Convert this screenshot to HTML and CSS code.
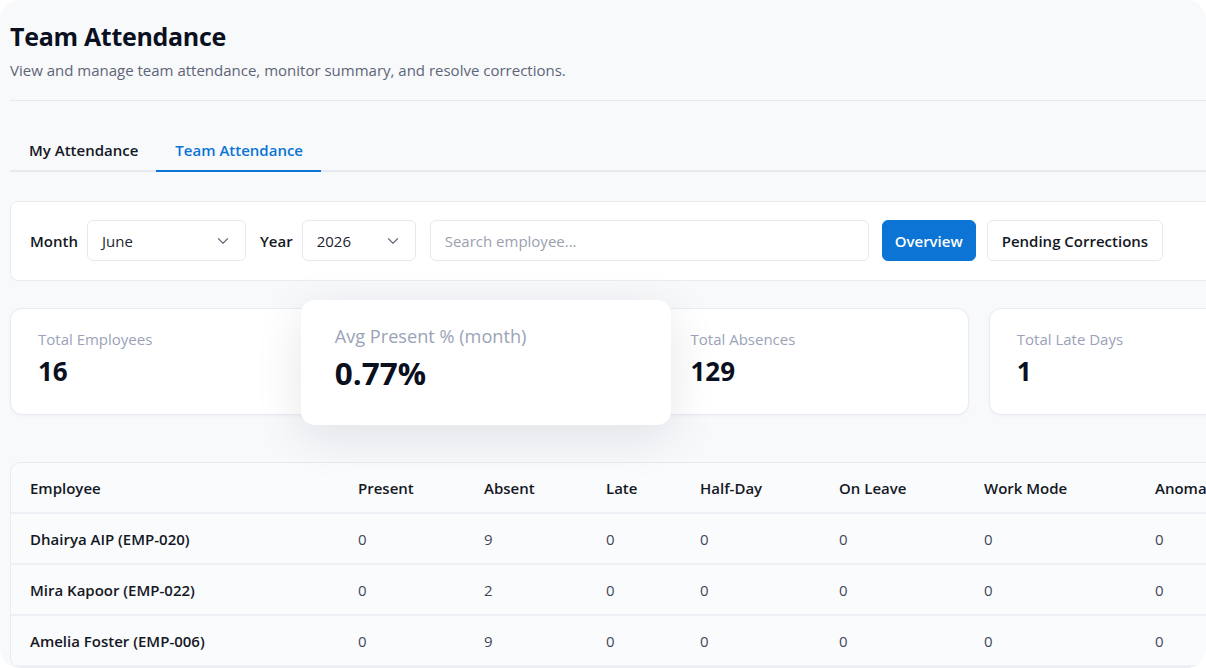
FILE: index.html
```html
<!DOCTYPE html>
<html lang="en">
<head>
    <meta charset="UTF-8">
    <meta name="viewport" content="width=device-width, initial-scale=1.0">
    <title>Team Attendance</title>
    <link rel="stylesheet" href="styles.css">
</head>
<body>
<div class="frame">
    <div class="page">

        <header class="page-head">
            <h1>Team Attendance</h1>
            <p>View and manage team attendance, monitor summary, and resolve corrections.</p>
        </header>

        <nav class="tabs">
            <a class="tab">My Attendance</a>
            <a class="tab active">Team Attendance</a>
        </nav>

        <!-- Filtres -->
        <section class="filters">
            <label class="filter-label">Month</label>
            <div class="select select-month">
                <span>June</span>
                <svg width="12" height="8" viewBox="0 0 12 8"><path d="M1.5 1.8 6 6.2l4.5-4.4" fill="none" stroke="#6b7280" stroke-width="1.3" stroke-linecap="round" stroke-linejoin="round"/></svg>
            </div>
            <label class="filter-label">Year</label>
            <div class="select select-year">
                <span>2026</span>
                <svg width="12" height="8" viewBox="0 0 12 8"><path d="M1.5 1.8 6 6.2l4.5-4.4" fill="none" stroke="#6b7280" stroke-width="1.3" stroke-linecap="round" stroke-linejoin="round"/></svg>
            </div>
            <input type="text" class="search" placeholder="Search employee...">
            <button class="btn btn-primary">Overview</button>
            <button class="btn">Pending Corrections</button>
        </section>

        <!-- Cartes de resume -->
        <section class="stats">
            <div class="stat">
                <div class="stat-label">Total Employees</div>
                <div class="stat-value">16</div>
            </div>
            <div class="stat stat-hover">
                <div class="stat-label">Avg Present % (month)</div>
                <div class="stat-value">0.77%</div>
            </div>
            <div class="stat">
                <div class="stat-label">Total Absences</div>
                <div class="stat-value">129</div>
            </div>
            <div class="stat">
                <div class="stat-label">Total Late Days</div>
                <div class="stat-value">1</div>
            </div>
        </section>

        <section class="table-card">
            <table class="att-table">
                <thead>
                    <tr>
                        <th class="c-emp">Employee</th>
                        <th class="c-present">Present</th>
                        <th class="c-absent">Absent</th>
                        <th class="c-late">Late</th>
                        <th class="c-half">Half-Day</th>
                        <th class="c-leave">On Leave</th>
                        <th class="c-mode">Work Mode</th>
                        <th>Anomalies</th>
                    </tr>
                </thead>
                <tbody>
                    <tr>
                        <td class="name">Dhairya AIP (EMP-020)</td>
                        <td>0</td><td>9</td><td>0</td><td>0</td><td>0</td><td>0</td><td>0</td>
                    </tr>
                    <tr>
                        <td class="name">Mira Kapoor (EMP-022)</td>
                        <td>0</td><td>2</td><td>0</td><td>0</td><td>0</td><td>0</td><td>0</td>
                    </tr>
                    <tr>
                        <td class="name">Amelia Foster (EMP-006)</td>
                        <td>0</td><td>9</td><td>0</td><td>0</td><td>0</td><td>0</td><td>0</td>
                    </tr>
                </tbody>
            </table>
        </section>

    </div>
</div>
</body>
</html>
```

FILE: styles.css
```css
body {
    margin: 0;
    padding: 0;
    background-color: #ffffff;
    font-family: "Open Sans", "Noto Sans", sans-serif;
    color: #111827;
}

.frame {
    width: 1206px;
    height: 668px;
    background-color: #f8f9fb;
    border-radius: 20px;
    overflow: hidden;
}

.page {
    width: 1285px;
    padding: 20px 0 0 10px;
}

/* En-tete */
.page-head {
    padding-bottom: 19px;
    border-bottom: 1px solid #e6e9ef;
}

.page-head h1 {
    margin: 0;
    font-size: 25px;
    font-weight: 700;
    color: #0b1020;
    letter-spacing: -0.3px;
    line-height: 32px;
}

.page-head p {
    margin: 7px 0 0 0;
    font-size: 15px;
    color: #5d6577;
    line-height: 22px;
}

/* Onglets */
.tabs {
    display: flex;
    margin-top: 29px;
    border-bottom: 2px solid #e6e9ef;
}

.tab {
    padding: 10px 18px 10px 19px;
    font-size: 15px;
    font-weight: 600;
    color: #141824;
    margin-bottom: -2px;
    border-bottom: 2px solid transparent;
}

.tab.active {
    color: #0b74d5;
    border-bottom-color: #0b74d5;
}

/* Filtres */
.filters {
    display: flex;
    align-items: center;
    margin-top: 29px;
    padding: 18px 19px 19px 19px;
    background-color: #ffffff;
    border: 1px solid #e8ebf0;
    border-radius: 8px;
}

.filter-label {
    font-size: 15px;
    font-weight: 600;
    color: #141824;
    margin-right: 9px;
}

.select {
    display: flex;
    align-items: center;
    justify-content: space-between;
    height: 41px;
    padding: 0 16px 0 14px;
    border: 1px solid #e6e9ef;
    border-radius: 6px;
    background-color: #ffffff;
    font-size: 15px;
    color: #1f2430;
    box-sizing: border-box;
}

.select-month {
    width: 159px;
    margin-right: 14px;
}

.select-year {
    width: 114px;
    margin-right: 14px;
}

.search {
    width: 439px;
    height: 41px;
    box-sizing: border-box;
    padding: 0 14px;
    border: 1px solid #e6e9ef;
    border-radius: 6px;
    font-family: inherit;
    font-size: 15px;
    color: #1f2430;
    margin-right: 13px;
}

.search::placeholder {
    color: #9aa1af;
}

.btn {
    height: 41px;
    padding: 0 14px;
    font-family: inherit;
    font-size: 15px;
    font-weight: 600;
    color: #141824;
    background-color: #ffffff;
    border: 1px solid #e6e9ef;
    border-radius: 6px;
    margin-right: 11px;
}

.btn-primary {
    padding: 0 12px;
    background-color: #0b74d5;
    border-color: #0b74d5;
    color: #ffffff;
}

/* Cartes */
.stats {
    display: grid;
    grid-template-columns: repeat(4, 1fr);
    gap: 20px;
    margin-top: 27px;
}

.stat {
    height: 107px;
    box-sizing: border-box;
    padding: 19px 27px;
    background-color: #ffffff;
    border: 1px solid #e8ebf0;
    border-radius: 12px;
    box-shadow: 0 1px 3px rgba(17, 24, 39, 0.04);
}

.stat-hover {
    position: relative;
    z-index: 2;
    border-color: transparent;
    transform: translate(-3px, 1px) scale(1.21, 1.17);
    box-shadow: 0 10px 40px rgba(17, 24, 39, 0.10);
}

.stat-label {
    font-size: 15px;
    color: #9aa3b7;
    line-height: 22px;
}

.stat-value {
    margin-top: 4px;
    font-size: 26px;
    font-weight: 700;
    color: #0b1020;
    line-height: 34px;
}

/* Tableau */
.table-card {
    margin-top: 47px;
    background-color: #fafbfd;
    border: 1px solid #e8ebf0;
    border-radius: 10px;
    overflow: hidden;
}

.att-table {
    width: 100%;
    border-collapse: collapse;
    table-layout: fixed;
}

.att-table th,
.att-table td {
    text-align: left;
    padding: 0 19px;
    height: 49px;
    border-bottom: 2px solid #eef0f5;
    font-size: 15px;
}

.att-table th {
    font-weight: 600;
    color: #141824;
}

.att-table td {
    color: #414859;
}

.att-table td.name {
    font-weight: 600;
    color: #141824;
}

.c-emp { width: 290px; }
.c-present { width: 88px; }
.c-absent { width: 84px; }
.c-late { width: 56px; }
.c-half { width: 101px; }
.c-leave { width: 107px; }
.c-mode { width: 133px; }
```
